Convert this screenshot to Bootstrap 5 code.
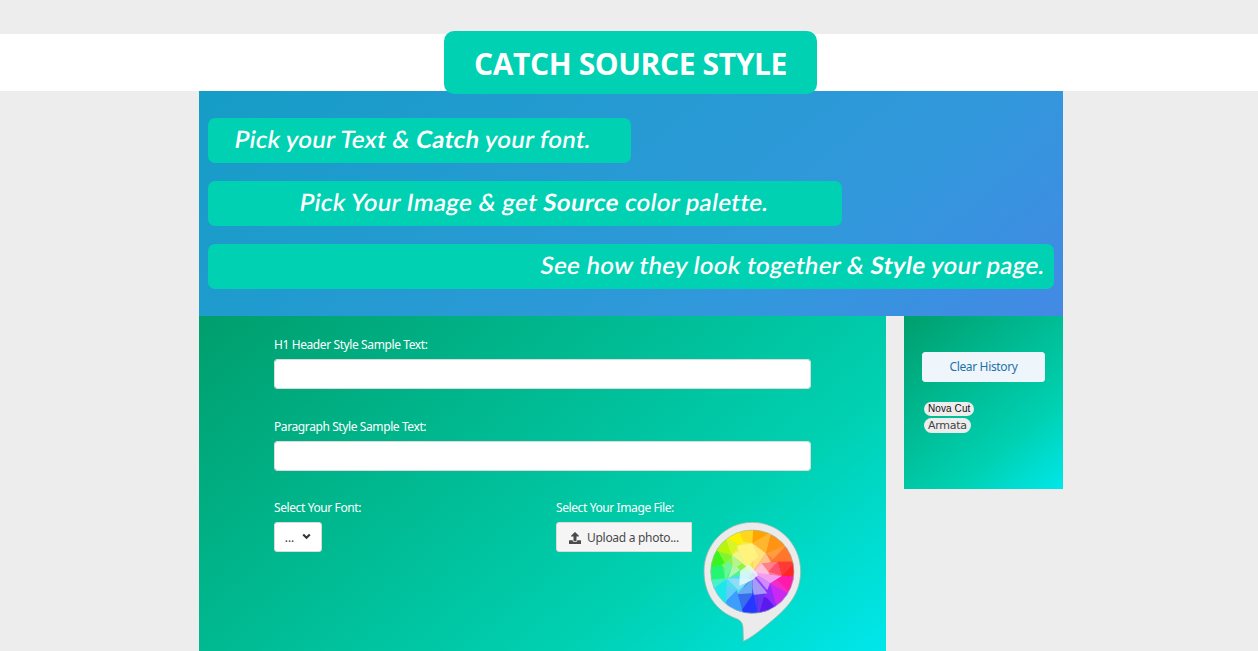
<!DOCTYPE html>
<html lang="en">
<head>
<meta charset="utf-8">
<meta name="viewport" content="width=device-width, initial-scale=1">
<title>Catch Source Style</title>
<link href="https://cdn.jsdelivr.net/npm/bootstrap@5.3.0/dist/css/bootstrap.min.css" rel="stylesheet">
<style>
html{overflow:hidden}
body{background:#ededed;font:12px/18px "Noto Sans","Open Sans",sans-serif;height:651px;overflow:hidden}
.title-strip{height:57px;margin-top:34px;background:#fff}
.title-pill{width:373px;height:63px;margin:-3px 0 0 3px;border-radius:10px;background:#00d1b2;position:relative;z-index:1}
.title-pill h1{font:700 30px/65px "Open Sans",sans-serif;letter-spacing:-.4px;white-space:nowrap}
.page{width:864px;margin-left:199px}
.hero{height:225px;padding:27px 9px;gap:18px;background:linear-gradient(141deg,#159dc6 0,#3298dc 71%,#4389e5 100%)}
.step{height:45px;border-radius:7px;background:#00d1b2;color:#fff;font:600 24px/42px Lato,sans-serif;white-space:nowrap}
.step span{display:inline-block;transform:skewX(-9deg)}
.step b{font-weight:700}
.s1{width:423px;padding-left:27px;letter-spacing:.26px}
.s2{width:634px;padding-left:92px;letter-spacing:.33px}
.s3{width:846px;padding-left:333px;letter-spacing:.34px}
.green{background:linear-gradient(141deg,#009e6c 0,#00d1b2 71%,#00e7eb 100%)}
.form-side{width:687px;height:335px;padding:20px 75px 0}
.history{width:159px;height:173px;padding:36px 18px 0}
.lbl{display:block;color:#fff;line-height:18px;white-space:nowrap;margin-bottom:5px;letter-spacing:-.4px}
.fld{height:30px;border:1px solid #dbdbdb;border-radius:3px;padding:0 8px;font-size:12px}
.fld + .lbl{margin-top:29px}
.ctl{--bs-btn-border-radius:3px;height:30px;font-size:12px;padding:1px 0 0;white-space:nowrap;color:#363636;border:1px solid #dbdbdb;line-height:18px}
.pick{width:48px;background:#fff;gap:8px}
.pick svg{margin-top:-2px}
.upload{width:136px;background:#f5f5f5;gap:6px;color:#4a4a4a;border-radius:3px 0 0 3px;letter-spacing:-.29px}
.clear{width:123px;background:#eef6fc;color:#1d72aa;border-color:#eef6fc;padding-top:5px;line-height:18px;letter-spacing:-.35px}
.pair{margin-top:28px}
.font-col{width:282px;flex:none}
.wheel{margin:16px 0 0 -2px;flex:none}
.tagline{border-radius:8px;background:#ededed;color:#222;padding:0 4px;white-space:nowrap;margin-left:2px}
.tag-nova{width:50px;height:14px;margin-top:20px;font:10px/14px "Liberation Sans",sans-serif;letter-spacing:.1px;color:#111}
.tag-arm{width:47px;height:15px;margin-top:2px;color:#444;font:11px/16px "DejaVu Sans",sans-serif;letter-spacing:-.25px}
</style>
</head>
<body>
<header class="title-strip d-flex justify-content-center"><div class="title-pill text-center text-white"><h1 class="m-0"><span>CATCH SOURCE STYLE</span></h1></div></header>
<main class="page">
<section class="hero d-flex flex-column">
<div class="step s1"><span>Pick your Text &amp; <b>Catch</b> your font.</span></div>
<div class="step s2"><span>Pick Your Image &amp; get <b>Source</b> color palette.</span></div>
<div class="step s3"><span>See how they look together &amp; <b>Style</b> your page.</span></div>
</section>
<div class="d-flex justify-content-between align-items-start">
<section class="form-side green">
<label class="lbl" for="head">H1 Header Style Sample Text:</label>
<input class="form-control fld" id="head" type="text">
<label class="lbl" for="para">Paragraph Style Sample Text:</label>
<input class="form-control fld" id="para" type="text">
<div class="d-flex pair align-items-start">
<div class="font-col"><span class="lbl">Select Your Font:</span>
<button class="btn ctl pick d-flex align-items-center justify-content-center" type="button"><span>...</span><svg width="9" height="7" viewBox="0 0 9 7"><path d="M1.2 1.4 4.5 4.7 7.8 1.4" fill="none" stroke="#363636" stroke-width="2.1"/></svg></button></div>
<div class="flex-shrink-0"><span class="lbl">Select Your Image File:</span>
<button class="btn ctl upload d-flex align-items-center justify-content-center" type="button"><svg width="12" height="12" viewBox="0 0 512 512" fill="#4a4a4a"><path d="M296 384h-80c-13 0-24-11-24-24V192h-88c-18 0-27-21-14-34L242 6c8-8 20-8 28 0l152 152c13 13 4 34-14 34h-88v168c0 13-11 24-24 24zm216-8v112c0 13-11 24-24 24H24c-13 0-24-11-24-24V376c0-13 11-24 24-24h136v8c0 31 25 56 56 56h80c31 0 56-25 56-56v-8h136c13 0 24 11 24 24z"/></svg><span>Upload a photo...</span></button></div>
<svg class="wheel" width="125" height="136" viewBox="0 0 375 408">
<defs><clipPath id="disc"><circle cx="187" cy="170" r="125"/></clipPath></defs>
<path d="M187 22C267 22 332 88 332 169C332 251 274 294 223 336C200 355 180 370 160 379L159 339C158 322 151 315 134 309C83 289 42 242 42 169C42 88 107 22 187 22Z" fill="#ebebeb" stroke="#8dbdb1" stroke-width="2.5"/>
<g clip-path="url(#disc)">
<path fill="#ffae30" d="M187 172 170 20 270 30Z"/><path fill="#ff8340" d="M187 172 260 20 345 110Z"/><path fill="#ff4040" d="M187 172 335 95 345 185Z"/><path fill="#f232c4" d="M187 172 345 178 320 270Z"/><path fill="#9a40fa" d="M187 172 325 255 240 330Z"/><path fill="#4a42f5" d="M187 172 260 320 175 330Z"/><path fill="#3c86f6" d="M187 172 185 330 80 310Z"/><path fill="#4cdff0" d="M187 172 100 320 20 190Z"/><path fill="#4df78a" d="M187 172 25 210 30 130Z"/><path fill="#8cf540" d="M187 172 30 145 90 40Z"/><path fill="#f0f040" d="M187 172 70 60 180 20Z"/>
<path fill="#ffa300" d="M190 35 245 50 187 85Z"/><path fill="#ffb62c" d="M245 50 187 85 228 115Z"/><path fill="#ffe278" d="M187 85 228 115 187 172Z"/>
<path fill="#ff9414" d="M245 50 290 90 228 115Z"/><path fill="#ff9c3c" d="M290 90 228 115 262 140Z"/><path fill="#ffc48a" d="M228 115 242 140 187 172Z"/>
<path fill="#ff762c" d="M290 90 318 140 242 140Z"/><path fill="#ff3936" d="M318 140 262 140 275 183Z"/><path fill="#ff8088" d="M215 145 262 140 275 183 187 172Z"/>
<path fill="#ff2525" d="M318 140 318 190 275 183Z"/><path fill="#ff5070" d="M262 140 275 183 235 170Z"/><path fill="#ffc1d8" d="M187 172 215 145 235 170 240 187Z"/>
<path fill="#ff1aaa" d="M318 183 305 240 250 183Z"/><path fill="#f12bc5" d="M250 183 305 240 250 207Z"/><path fill="#f49cf0" d="M187 172 275 183 240 205Z"/>
<path fill="#cc28f2" d="M305 240 262 285 240 205Z"/><path fill="#902cff" d="M240 205 262 285 220 240Z"/><path fill="#cf8cff" d="M187 172 240 205 232 225Z"/>
<path fill="#5c19ef" d="M262 285 205 305 200 235 232 250Z"/><path fill="#6836f2" d="M200 225 225 235 205 305Z"/><path fill="#a79bf8" d="M187 180 232 235 187 240Z"/>
<path fill="#2438ff" d="M205 305 145 300 187 220Z"/><path fill="#366eee" d="M187 195 187 240 145 300 142 238Z"/><path fill="#6aaaf4" d="M187 192 187 235 140 238Z"/>
<path fill="#3c9dfd" d="M145 300 95 270 140 225 158 290Z"/><path fill="#65cbfa" d="M140 225 95 270 110 212Z"/><path fill="#8edcf5" d="M187 192 145 225 110 190Z"/>
<path fill="#1ce8ea" d="M110 195 108 280 60 215Z"/><path fill="#4af1c7" d="M105 195 65 225 55 185Z"/>
<path fill="#26f66f" d="M105 190 55 195 55 160 95 140Z"/><path fill="#69f797" d="M105 195 105 135 130 150Z"/><path fill="#b0f6b3" d="M150 165 130 145 115 190Z"/>
<path fill="#39f51d" d="M55 160 75 90 105 145Z"/><path fill="#83f52f" d="M75 90 125 125 105 145Z"/><path fill="#b8f48d" d="M125 120 155 145 130 165Z"/>
<path fill="#b7f50c" d="M70 105 105 60 125 120Z"/><path fill="#d9f526" d="M105 60 150 90 125 120Z"/><path fill="#edf68a" d="M125 120 187 85 170 155Z"/>
<path fill="#fff000" d="M95 60 145 40 160 75 150 90Z"/><path fill="#ffd51d" d="M145 40 190 35 187 85 160 80Z"/><path fill="#fff27d" d="M140 92 187 85 205 125 170 155Z"/>
<path fill="#e8fafa" d="M150 168 177 148 205 180 187 195 148 212Z" opacity=".85"/>
</g>
<circle cx="187" cy="170" r="125" fill="none" stroke="#9cc2b4" stroke-width="2"/>
</svg>
</div>
</section>
<aside class="history green">
<button class="btn ctl clear d-flex justify-content-center" type="button">Clear History</button>
<div class="tagline tag-nova"><span>Nova Cut</span></div>
<div class="tagline tag-arm"><span>Armata</span></div>
</aside>
</div>
</main>
<script src="https://cdn.jsdelivr.net/npm/bootstrap@5.3.0/dist/js/bootstrap.bundle.min.js"></script>
</body>
</html>
